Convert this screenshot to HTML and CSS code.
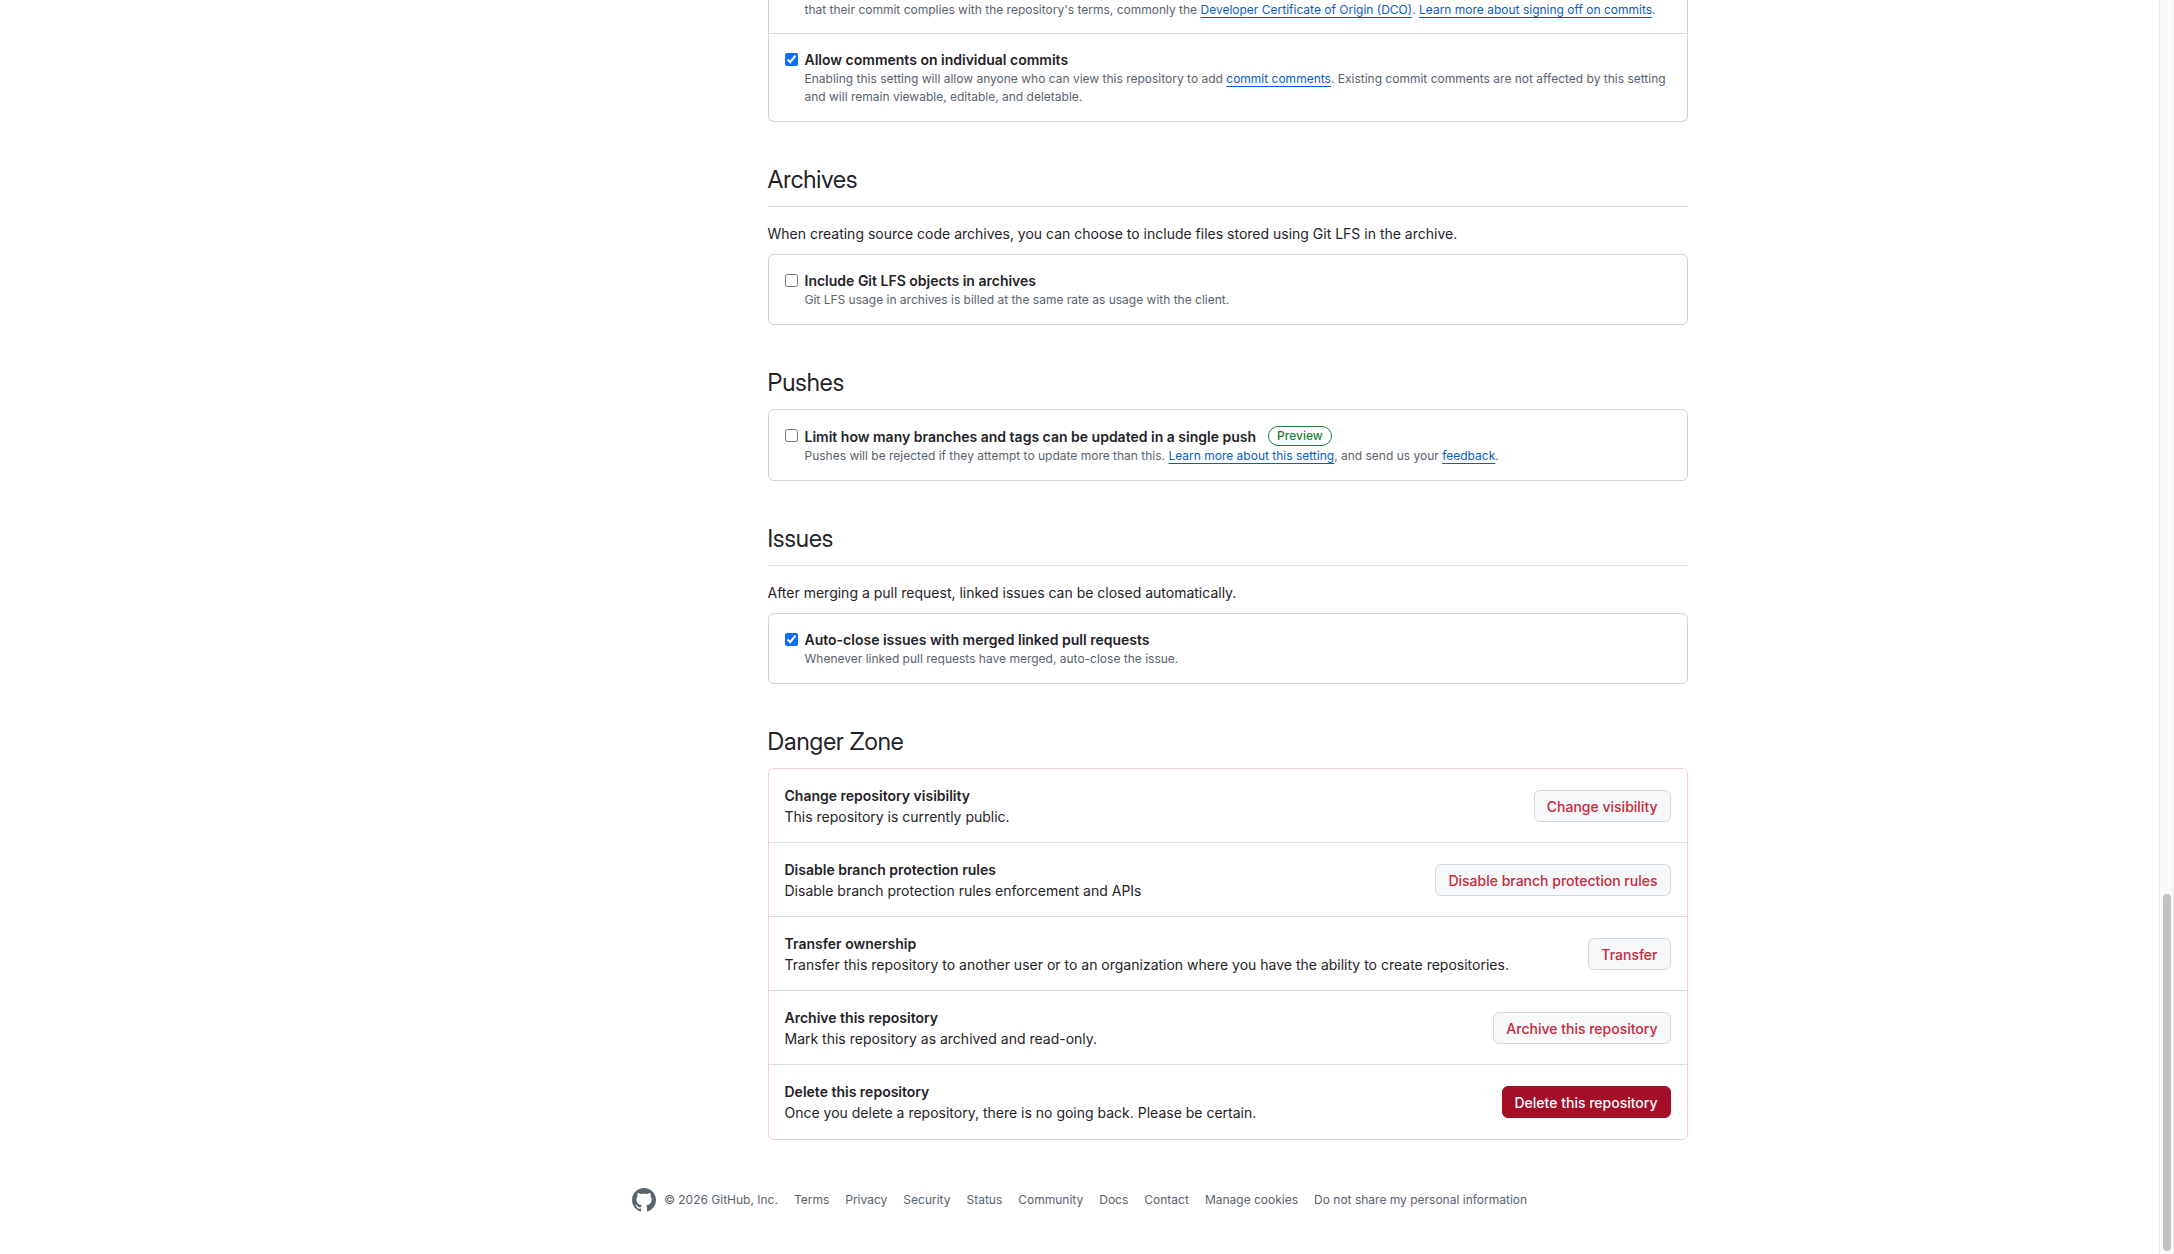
FILE: index.html
```html
<!DOCTYPE html>
<html lang="en">
<head>
<meta charset="utf-8">
<title>Repository settings</title>
<link rel="stylesheet" href="styles.css">
</head>
<body>
<div class="page">
  <main class="layout">
    <div class="content">
      <section class="section">
        <div class="box box-continued">
          <div class="row row-continued">
            <p class="note">that their commit complies with the repository's terms, commonly the <a class="link" href="#dco">Developer Certificate of Origin (DCO)</a>. <a class="link" href="#signing-off">Learn more about signing off on commits</a>.</p>
          </div>
          <div class="row">
            <input class="checkbox" type="checkbox" id="commit-comments" checked>
            <div class="option">
              <label class="option-label" for="commit-comments">Allow comments on individual commits</label>
              <p class="note">Enabling this setting will allow anyone who can view this repository to add <a class="link" href="#commit-comments-docs">commit comments</a>. Existing commit comments are not affected by this setting and will remain viewable, editable, and deletable.</p>
            </div>
          </div>
        </div>
      </section>

      <section class="section">
        <h2 class="heading heading-ruled">Archives</h2>
        <p class="intro">When creating source code archives, you can choose to include files stored using Git LFS in the archive.</p>
        <div class="box">
          <div class="row">
            <input class="checkbox" type="checkbox" id="lfs">
            <div class="option">
              <label class="option-label" for="lfs">Include Git LFS objects in archives</label>
              <p class="note">Git LFS usage in archives is billed at the same rate as usage with the client.</p>
            </div>
          </div>
        </div>
      </section>

      <section class="section">
        <h2 class="heading">Pushes</h2>
        <div class="box">
          <div class="row">
            <input class="checkbox" type="checkbox" id="push-limit">
            <div class="option">
              <div class="option-title">
                <label class="option-label" for="push-limit">Limit how many branches and tags can be updated in a single push</label>
                <span class="badge">Preview</span>
              </div>
              <p class="note">Pushes will be rejected if they attempt to update more than this. <a class="link" href="#push-limit-docs">Learn more about this setting</a>, and send us your <a class="link" href="#feedback">feedback</a>.</p>
            </div>
          </div>
        </div>
      </section>

      <section class="section">
        <h2 class="heading heading-ruled">Issues</h2>
        <p class="intro">After merging a pull request, linked issues can be closed automatically.</p>
        <div class="box">
          <div class="row">
            <input class="checkbox" type="checkbox" id="auto-close" checked>
            <div class="option">
              <label class="option-label" for="auto-close">Auto-close issues with merged linked pull requests</label>
              <p class="note">Whenever linked pull requests have merged, auto-close the issue.</p>
            </div>
          </div>
        </div>
      </section>

      <section class="section">
        <h2 class="heading">Danger Zone</h2>
        <ul class="box box-danger">
          <li class="danger-row">
            <div><strong class="danger-title">Change repository visibility</strong><p class="danger-text">This repository is currently public.</p></div>
            <button class="button" type="button">Change visibility</button>
          </li>
          <li class="danger-row">
            <div><strong class="danger-title">Disable branch protection rules</strong><p class="danger-text">Disable branch protection rules enforcement and APIs</p></div>
            <button class="button" type="button">Disable branch protection rules</button>
          </li>
          <li class="danger-row">
            <div><strong class="danger-title">Transfer ownership</strong><p class="danger-text">Transfer this repository to another user or to an organization where you have the ability to create repositories.</p></div>
            <button class="button" type="button">Transfer</button>
          </li>
          <li class="danger-row">
            <div><strong class="danger-title">Archive this repository</strong><p class="danger-text">Mark this repository as archived and read-only.</p></div>
            <button class="button" type="button">Archive this repository</button>
          </li>
          <li class="danger-row">
            <div><strong class="danger-title">Delete this repository</strong><p class="danger-text">Once you delete a repository, there is no going back. Please be certain.</p></div>
            <button class="button button-solid" type="button">Delete this repository</button>
          </li>
        </ul>
      </section>
    </div>
  </main>

  <footer class="footer">
    <div class="footer-brand">
      <a class="footer-logo" href="#home" aria-label="GitHub">
        <svg width="24" height="24" viewBox="0 0 16 16" fill="currentColor" aria-hidden="true"><path d="M8 0c4.42 0 8 3.58 8 8a8.013 8.013 0 0 1-5.45 7.59c-.4.08-.55-.17-.55-.38 0-.27.01-1.13.01-2.2 0-.75-.25-1.23-.54-1.48 1.78-.2 3.65-.88 3.65-3.95 0-.88-.31-1.59-.82-2.15.08-.2.36-1.02-.08-2.12 0 0-.67-.22-2.2.82-.64-.18-1.32-.27-2-.27-.68 0-1.36.09-2 .27-1.53-1.03-2.2-.82-2.2-.82-.44 1.1-.16 1.92-.08 2.12-.51.56-.82 1.28-.82 2.15 0 3.06 1.86 3.75 3.64 3.95-.23.2-.44.55-.51 1.07-.46.21-1.61.55-2.33-.66-.15-.24-.6-.83-1.23-.82-.67.01-.27.38.01.53.34.19.73.9.82 1.13.16.45.68 1.31 2.69.94 0 .67.01 1.3.01 1.49 0 .21-.15.45-.55.38A7.995 7.995 0 0 1 0 8c0-4.42 3.58-8 8-8Z"/></svg>
      </a>
      <span>© 2026 GitHub, Inc.</span>
    </div>
    <nav class="footer-nav" aria-label="Footer">
      <a class="footer-link" href="#terms">Terms</a>
      <a class="footer-link" href="#privacy">Privacy</a>
      <a class="footer-link" href="#security">Security</a>
      <a class="footer-link" href="#status">Status</a>
      <a class="footer-link" href="#community">Community</a>
      <a class="footer-link" href="#docs">Docs</a>
      <a class="footer-link" href="#contact">Contact</a>
      <button class="footer-link footer-button" type="button">Manage cookies</button>
      <button class="footer-link footer-button" type="button">Do not share my personal information</button>
    </nav>
  </footer>
</div>
<div class="scrollbar" aria-hidden="true"><div class="scrollbar-thumb"></div></div>
</body>
</html>
```
FILE: styles.css
```css
* {
  box-sizing: border-box;
}

body {
  margin: 0;
  display: grid;
  grid-template-columns: minmax(0, 1fr) 15px;
  min-height: 100vh;
  background: #fff;
  color: #1f2328;
  font-family: Inter, "Liberation Sans", sans-serif;
  font-size: 14px;
  line-height: 21px;
}

h2, p, ul {
  margin: 0;
  padding: 0;
}

/* Settings column, beside an empty sidebar track */
.layout {
  max-width: 1280px;
  margin: 0 auto;
  padding: 0 32px;
  display: grid;
  grid-template-columns: 296px minmax(0, 1fr);
}

.content {
  grid-column: 2;
  display: flex;
  flex-direction: column;
  gap: 40px;
}

.heading {
  margin-bottom: 8px;
  font-family: "Inter Display", Inter, "Liberation Sans", sans-serif;
  font-size: 24px;
  font-weight: 400;
  line-height: 36px;
}

.heading-ruled {
  margin-bottom: 16px;
  padding-bottom: 8px;
  border-bottom: 1px solid #d9dde1;
}

.intro {
  margin-bottom: 10px;
}

.box {
  border: 1px solid #d1d5da;
  border-radius: 6px;
  list-style: none;
}

.box-continued {
  border-top: 0;
  border-top-left-radius: 0;
  border-top-right-radius: 0;
}

.row {
  display: flex;
  gap: 7px;
  padding: 15px 16px;
}

.row + .row {
  border-top: 1px solid #d9dde1;
}

.row-continued {
  padding: 1px 16px 14px 36px;
}

.checkbox {
  flex: none;
  width: 13px;
  height: 13px;
  margin: 4px 0 0;
  accent-color: #0d6efd;
}

.option-label {
  display: block;
  font-weight: 600;
}

.option-title {
  display: flex;
  align-items: center;
  gap: 12px;
  min-height: 22px;
}

.badge {
  padding: 0 8px;
  border: 1px solid #1a7f37;
  border-radius: 20px;
  color: #1a7f37;
  font-size: 12px;
  font-weight: 500;
  line-height: 18px;
}

.note {
  color: #59636e;
  font-size: 12px;
  line-height: 18px;
}

.link {
  color: #0b5cc4;
  text-decoration: underline;
  text-decoration-thickness: 1px;
  text-underline-offset: 3px;
}

.box-danger {
  border-color: #f8cdd2;
}

.danger-row {
  display: flex;
  align-items: center;
  justify-content: space-between;
  gap: 16px;
  padding: 16px 16px 15px;
}

.danger-row + .danger-row {
  border-top: 1px solid #d9dde1;
}

.danger-row:last-child {
  padding-bottom: 16px;
}

.danger-title {
  font-weight: 600;
}

.button {
  flex: none;
  height: 32px;
  padding: 0 12px;
  border: 1px solid #d1d9e0;
  border-radius: 6px;
  background: #f6f8fa;
  color: #c9283a;
  font: inherit;
  font-weight: 500;
}

.button-solid {
  border-color: #a40e26;
  background: #a40e26;
  color: #fff;
}

.footer {
  display: flex;
  flex-wrap: wrap;
  align-items: center;
  justify-content: center;
  gap: 16px;
  padding: 48px 16px 40px;
  color: #59636e;
  font-size: 12px;
  line-height: 18px;
}

.footer-brand {
  display: flex;
  align-items: center;
  gap: 8px;
}

.footer-logo {
  display: flex;
  color: #59636e;
}

.footer-nav {
  display: flex;
  flex-wrap: wrap;
  gap: 16px;
}

.footer-link {
  color: #59636e;
  text-decoration: none;
}

.footer-button {
  padding: 0;
  border: 0;
  background: none;
  font: inherit;
}

.scrollbar {
  display: flex;
  flex-direction: column;
  justify-content: flex-end;
  padding: 3px 2px 3px 3px;
  border-left: 1px solid #e8e8e8;
  border-right: 1px solid #efefef;
  background: #fafafa;
}

.scrollbar-thumb {
  height: 28.5vh;
  border-radius: 4px;
  background: #c1c1c1;
}
```
